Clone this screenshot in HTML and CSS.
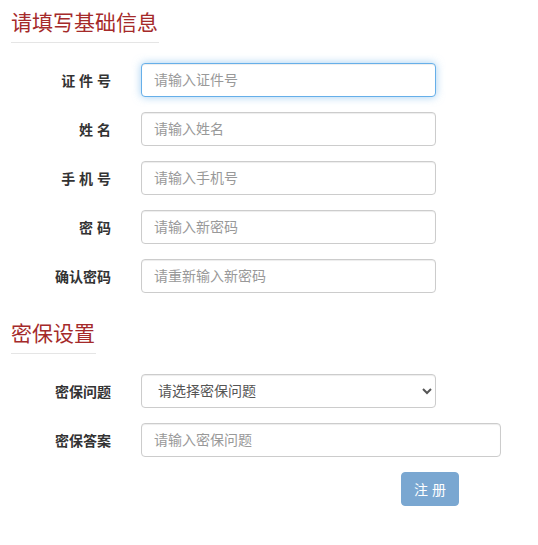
FILE: index.html
```html
<!DOCTYPE html>
<html lang="zh-CN">
<head>
<meta charset="utf-8">
<title>注册</title>
<link rel="stylesheet" href="styles.css">
</head>
<body>
<div class="page">
  <div class="section-head"><span class="section-title">请填写基础信息</span></div>
  <form class="form">
    <div class="row">
      <label class="label">证 件 号</label>
      <input class="field focused" type="text" placeholder="请输入证件号">
    </div>
    <div class="row">
      <label class="label">姓 名</label>
      <input class="field" type="text" placeholder="请输入姓名">
    </div>
    <div class="row">
      <label class="label">手 机 号</label>
      <input class="field" type="text" placeholder="请输入手机号">
    </div>
    <div class="row">
      <label class="label">密 码</label>
      <input class="field" type="password" placeholder="请输入新密码">
    </div>
    <div class="row">
      <label class="label">确认密码</label>
      <input class="field" type="password" placeholder="请重新输入新密码">
    </div>
  </form>

  <div class="section-head second"><span class="section-title">密保设置</span></div>
  <form class="form">
    <div class="row">
      <label class="label">密保问题</label>
      <select class="field select">
        <option>请选择密保问题</option>
      </select>
    </div>
    <div class="row">
      <label class="label">密保答案</label>
      <input class="field wide" type="text" placeholder="请输入密保问题">
    </div>
    <div class="row">
      <span class="label"></span>
      <div class="actions"><button type="button" class="btn" disabled>注 册</button></div>
    </div>
  </form>
</div>
</body>
</html>
```

FILE: styles.css
```css
* { box-sizing: border-box; }
html, body { margin: 0; padding: 0; background: #fff; }
body {
  font-family: "Liberation Sans", "Noto Sans CJK SC", sans-serif;
  font-size: 14px;
  color: #333;
}
.page { padding: 11px 0 0 11px; }
.section-head { margin-bottom: 20px; }
.section-head.second { margin-top: 29px; }
.section-title {
  display: inline-block;
  font-size: 21px;
  line-height: 23px;
  color: #a52a2a;
  padding-bottom: 8px;
  border-bottom: 1px solid #e5e5e5;
  padding-right: 1px;
}
.form { display: flex; flex-direction: column; gap: 15px; }
.row { display: flex; align-items: center; }
.label {
  width: 100px;
  text-align: right;
  font-weight: bold;
  font-size: 14px;
  color: #333;
  margin-right: 30px;
}
.field {
  width: 295px;
  height: 34px;
  padding: 6px 12px;
  font-family: "Liberation Sans", "Noto Sans CJK SC", sans-serif;
  font-size: 14px;
  color: #555;
  background: #fff;
  border: 1px solid #ccc;
  border-radius: 4px;
  box-shadow: inset 0 1px 1px rgba(0,0,0,.075);
  outline: none;
}
.field::placeholder { color: #999; }
.field.focused {
  border-color: #66afe9;
  box-shadow: inset 0 1px 1px rgba(0,0,0,.075), 0 0 8px rgba(102,175,233,.6);
}
.field.wide { width: 360px; }
.select { padding: 6px 8px 6px 12px; }
.actions { padding-left: 260px; }
.btn {
  width: 58px;
  height: 34px;
  border: 1px solid #7aa7d1;
  border-radius: 4px;
  background: #7aa7d1;
  color: #fff;
  font-family: "Liberation Sans", "Noto Sans CJK SC", sans-serif;
  font-size: 14px;
  padding: 0;
}
```
